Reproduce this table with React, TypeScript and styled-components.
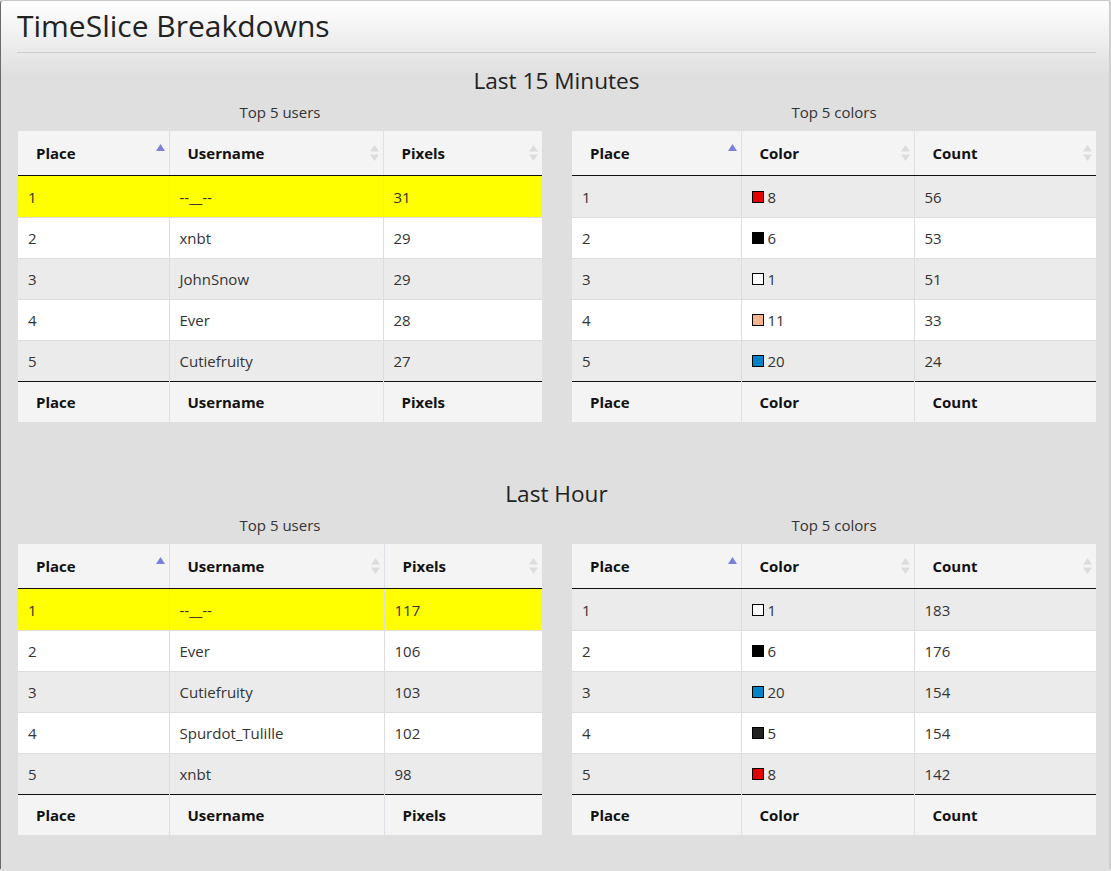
import React from "react";
import styled, { createGlobalStyle } from "styled-components";

const GlobalStyle = createGlobalStyle`
  html, body {
    margin: 0;
    padding: 0;
    background: #dfdfdf;
  }
  body {
    font-family: "Open Sans", "Noto Sans", sans-serif;
    color: #333;
  }
`;

const Panel = styled.div`
  min-height: 869px;
  box-sizing: border-box;
  background: linear-gradient(to bottom, #ffffff 0px, #dfdfdf 75px, #dfdfdf 100%);
  border-top: 1px solid #c9c9c9;
  border-left: 1px solid #6a6a6a;
  border-right: 2px solid #cfcfcf;
  border-radius: 4px 4px 0 0;
  padding: 0 13px 0 16px;
`;

const Header = styled.h1`
  margin: 0;
  padding: 5px 0 6px 0;
  font-size: 30px;
  line-height: 40px;
  font-weight: 400;
  color: #222;
  border-bottom: 1px solid #cccccc;
`;

const Section = styled.section<{ $first?: boolean }>`
  margin-top: ${(p) => (p.$first ? "12px" : "56px")};
`;

const SectionTitle = styled.h2`
  margin: 0;
  text-align: center;
  font-size: 22.6px;
  line-height: 30px;
  font-weight: 400;
  color: #222;
  padding-top: 1px;
  margin-bottom: -1px;
`;

const Columns = styled.div`
  display: grid;
  grid-template-columns: 1fr 1fr;
  column-gap: 30px;
  padding-left: 1px;
  margin-top: 6px;
`;

const Caption = styled.div`
  text-align: center;
  font-size: 15px;
  line-height: 22px;
  color: #333;
  margin-bottom: 8px;
`;

const Table = styled.table`
  width: 100%;
  border-collapse: collapse;
  font-size: 15px;
  table-layout: fixed;
`;

const HeadCell = styled.th`
  background: #f4f4f4;
  text-align: left;
  font-weight: 700;
  color: #111;
  padding: 0;
  border-bottom: 1px solid #111;
  border-left: 1px solid #dde0e4;
  &:first-child {
    border-left: none;
  }
`;

const HeadInner = styled.div`
  display: flex;
  justify-content: space-between;
  align-items: center;
  height: 44px;
  padding: 0 4px 0 18px;
  line-height: 24px;
`;

const FootCell = styled.th`
  background: #f4f4f4;
  text-align: left;
  font-weight: 700;
  color: #111;
  padding: 8px 18px;
  line-height: 24px;
  border-left: 1px solid #dde0e4;
  &:first-child {
    border-left: none;
  }
`;

const FootRow = styled.tr`
  border-top: 1px solid #111;
`;

const Row = styled.tr<{ $bg: string }>`
  background: ${(p) => p.$bg};
  & + & {
    border-top: 1px solid #dddddd;
  }
  &:first-child td {
    padding-top: 9px;
  }
`;

const Cell = styled.td`
  padding: 8px 10px;
  line-height: 24px;
  color: #333;
  border-left: 1px solid #dddddd;
  &:first-child {
    border-left: none;
  }
`;

const SortMark = styled.span<{ $active?: boolean }>`
  display: flex;
  align-self: ${(p) => (p.$active ? "flex-start" : "center")};
  margin-top: ${(p) => (p.$active ? "13px" : "0")};
`;

const ColorCell = styled.span`
  display: inline-flex;
  align-items: center;
  gap: 4px;
`;

const Swatch = styled.span<{ $c: string }>`
  display: inline-block;
  width: 10px;
  height: 10px;
  border: 1px solid #000;
  background: ${(p) => p.$c};
`;

const SortIcon = ({ active }: { active?: boolean }) =>
  active ? (
    <SortMark $active>
      <svg width="9" height="7" viewBox="0 0 9 7">
        <path d="M4.5 0 L9 7 L0 7 Z" fill="#7b80dc" />
      </svg>
    </SortMark>
  ) : (
    <SortMark>
      <svg width="9" height="16" viewBox="0 0 9 16">
        <path d="M4.5 0 L9 6.5 L0 6.5 Z" fill="#dcdcdc" />
        <path d="M4.5 16 L9 9.5 L0 9.5 Z" fill="#dcdcdc" />
      </svg>
    </SortMark>
  );

type TableProps = {
  columns: string[];
  widths: string[];
  rows: React.ReactNode[][];
  highlightFirst?: boolean;
};

const DataTable = ({ columns, widths, rows, highlightFirst }: TableProps) => (
  <Table>
    <colgroup>
      {widths.map((w, i) => (
        <col key={i} style={{ width: w }} />
      ))}
    </colgroup>
    <thead>
      <tr>
        {columns.map((c, i) => (
          <HeadCell key={c}>
            <HeadInner>
              <span>{c}</span>
              <SortIcon active={i === 0} />
            </HeadInner>
          </HeadCell>
        ))}
      </tr>
    </thead>
    <tbody>
      {rows.map((r, i) => (
        <Row
          key={i}
          $bg={highlightFirst && i === 0 ? "#ffff00" : i % 2 === 0 ? "#ebebeb" : "#ffffff"}
        >
          {r.map((v, j) => (
            <Cell key={j}>{v}</Cell>
          ))}
        </Row>
      ))}
    </tbody>
    <tfoot>
      <FootRow>
        {columns.map((c) => (
          <FootCell key={c}>{c}</FootCell>
        ))}
      </FootRow>
    </tfoot>
  </Table>
);

const swatch = (c: string, n: string) => (
  <ColorCell>
    <Swatch $c={c} />
    {n}
  </ColorCell>
);

const palette: Record<string, string> = {
  "1": "#ffffff",
  "5": "#222222",
  "6": "#000000",
  "8": "#e50000",
  "11": "#f5b38d",
  "20": "#0083c7",
};

const sections = [
  {
    title: "Last 15 Minutes",
    userWidths: ["151px", "214px", "159px"],
    users: [
      ["--__--", "31"],
      ["xnbt", "29"],
      ["JohnSnow", "29"],
      ["Ever", "28"],
      ["Cutiefruity", "27"],
    ],
    colors: [
      ["8", "56"],
      ["6", "53"],
      ["1", "51"],
      ["11", "33"],
      ["20", "24"],
    ],
  },
  {
    title: "Last Hour",
    userWidths: ["151px", "215px", "158px"],
    users: [
      ["--__--", "117"],
      ["Ever", "106"],
      ["Cutiefruity", "103"],
      ["Spurdot_Tulille", "102"],
      ["xnbt", "98"],
    ],
    colors: [
      ["1", "183"],
      ["6", "176"],
      ["20", "154"],
      ["5", "154"],
      ["8", "142"],
    ],
  },
];

export default function App() {
  return (
    <>
      <GlobalStyle />
      <Panel>
        <Header>TimeSlice Breakdowns</Header>
        {sections.map((s, si) => (
          <Section key={s.title} $first={si === 0}>
            <SectionTitle>{s.title}</SectionTitle>
            <Columns>
              <div>
                <Caption>Top 5 users</Caption>
                <DataTable
                  columns={["Place", "Username", "Pixels"]}
                  widths={s.userWidths}
                  highlightFirst
                  rows={s.users.map((u, i) => [String(i + 1), u[0], u[1]])}
                />
              </div>
              <div>
                <Caption>Top 5 colors</Caption>
                <DataTable
                  columns={["Place", "Color", "Count"]}
                  widths={["169px", "173px", "182px"]}
                  rows={s.colors.map((c, i) => [
                    String(i + 1),
                    swatch(palette[c[0]], c[0]),
                    c[1],
                  ])}
                />
              </div>
            </Columns>
          </Section>
        ))}
      </Panel>
    </>
  );
}
